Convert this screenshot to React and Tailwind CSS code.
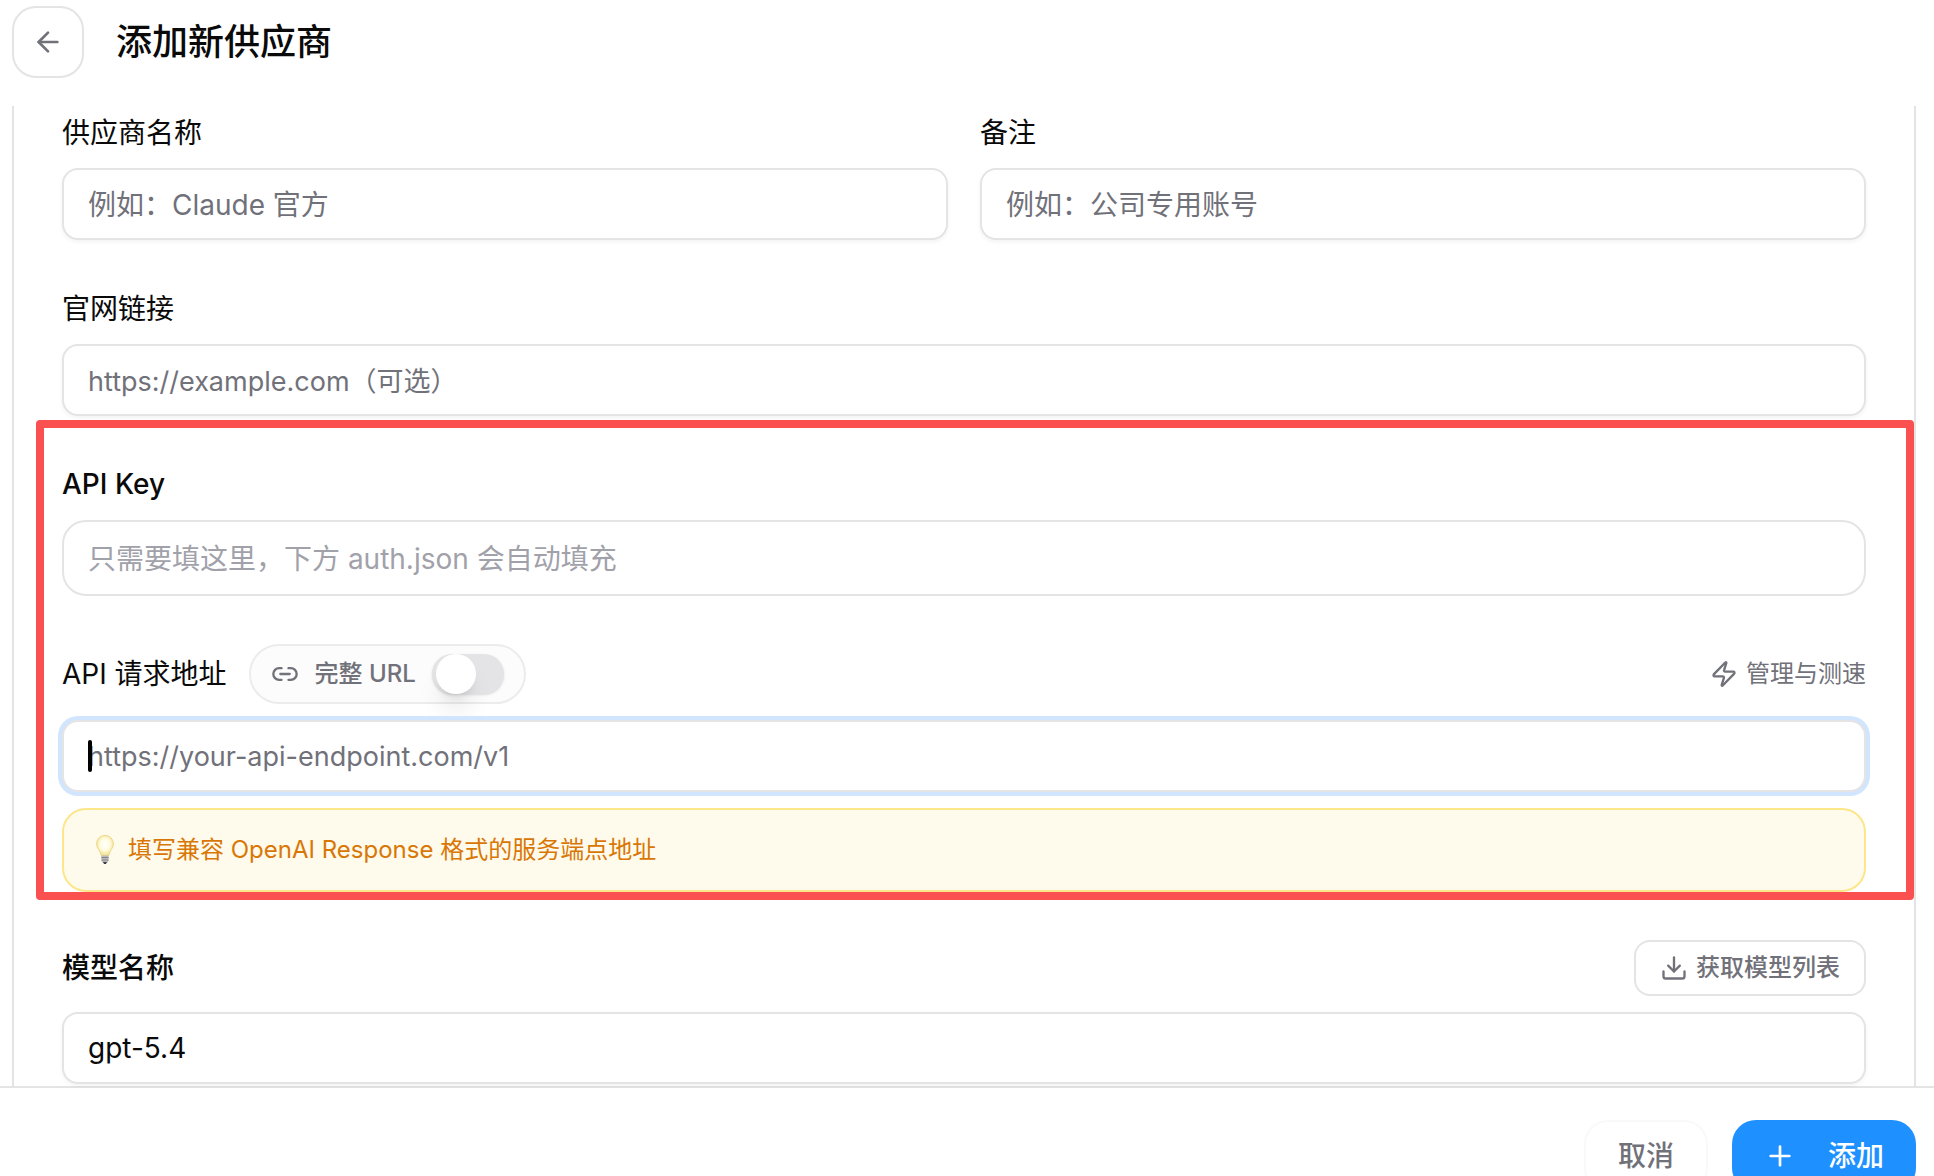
import { useState } from "react";
import { ArrowLeft, Download, Link2, Plus, Zap } from "lucide-react";

const inputClass =
  "w-full h-[72px] px-6 rounded-2xl border-2 border-[#e4e4e4] bg-white shadow-[0_2px_4px_rgba(0,0,0,0.05)] text-[#0a0a0a] placeholder:text-[#71717a] outline-none";

function LightBulb() {
  return (
    <svg width="32" height="32" viewBox="0 0 32 32" aria-hidden="true" className="shrink-0">
      <defs>
        <radialGradient id="bulb" cx="50%" cy="45%" r="60%">
          <stop offset="0%" stopColor="#ffffff" />
          <stop offset="50%" stopColor="#fffbe0" />
          <stop offset="100%" stopColor="#f0d878" />
        </radialGradient>
      </defs>
      <path
        d="M17 1.5c-5 0-8.4 3.8-8.4 8.4 0 4.4 3.8 6.6 4.6 11.6h7.6c.8-5 4.6-7.2 4.6-11.6 0-4.6-3.4-8.4-8.4-8.4z"
        fill="url(#bulb)"
        stroke="#ecd98c"
      />
      <path d="M13.4 21.5h7.2v5l-1.4 2.2h-4.4l-1.4-2.2z" fill="#b9b9b9" />
      <path d="M13.4 23.5h7.2M13.6 26h6.8" stroke="#85858a" />
      <path d="M15 28h4l-1 2h-2z" fill="#3f3f46" />
    </svg>
  );
}

function Field({ id, label, placeholder, type = "text", textSize = "text-[28px]" }) {
  return (
    <div>
      <label htmlFor={id} className="block mb-[14px] text-[28px] leading-[42px]">
        {label}
      </label>
      <input
        id={id}
        type={type}
        placeholder={placeholder}
        className={`${inputClass} ${textSize} pt-[2px]`}
      />
    </div>
  );
}

export default function App() {
  const [apiKey, setApiKey] = useState("");
  const [endpoint, setEndpoint] = useState("");
  const [fullUrl, setFullUrl] = useState(false);
  const [model, setModel] = useState("gpt-5.4");

  return (
    <div className="h-screen overflow-hidden bg-white text-[#0a0a0a] font-[Inter,'Noto_Sans_CJK_SC',sans-serif]">
      <header className="flex items-center gap-8 px-3 pt-[6px] pb-7">
        <button
          type="button"
          aria-label="返回"
          className="flex items-center justify-center size-[72px] rounded-3xl border-2 border-[#e4e4e4] text-[#71717a]"
        >
          <ArrowLeft size={32} />
        </button>
        <h1 className="text-[36px] leading-[48px] font-medium">添加新供应商</h1>
      </header>

      <main className="ml-3 mr-[18px] px-12 pb-[2px] border-x-2 border-[#e4e4e4]">
        <div className="grid grid-cols-2 gap-8 pt-[6px]">
          <Field id="name" label="供应商名称" placeholder="例如：Claude 官方" />
          <Field id="notes" label="备注" placeholder="例如：公司专用账号" />
        </div>
        <div className="mt-12">
          <Field
            id="website"
            type="url"
            label="官网链接"
            placeholder="https://example.com（可选）"
            textSize="text-[27px]"
          />
        </div>

        <section className="relative pt-12">
          <label htmlFor="api-key" className="block mb-4 text-[28px] leading-10 font-medium">
            API Key
          </label>
          <input
            id="api-key"
            type="text"
            value={apiKey}
            onChange={(e) => setApiKey(e.target.value)}
            placeholder="只需要填这里，下方 auth.json 会自动填充"
            className="w-full h-[76px] px-6 pt-[2px] rounded-3xl border-2 border-[#e4e4e4] text-[28px] placeholder:text-[#a1a1aa] outline-none"
          />

          <div className="flex items-center justify-between mt-12 mb-4">
            <div className="flex items-center gap-[22px]">
              <label htmlFor="endpoint" className="text-[28px] leading-10">
                API 请求地址
              </label>
              <div className="flex items-center gap-4 h-[60px] px-5 rounded-full border-2 border-[#ececec] bg-[#fcfcfc]">
                <Link2 size={28} className="text-[#71717a]" />
                <label htmlFor="full-url" className="text-2xl font-medium text-[#71717a]">
                  完整 URL
                </label>
                <button
                  id="full-url"
                  type="button"
                  role="switch"
                  aria-checked={fullUrl}
                  onClick={() => setFullUrl(!fullUrl)}
                  className="flex w-[72px] h-10 px-1 rounded-full bg-[#e4e4e7] shadow-sm"
                >
                  <span
                    className={`size-10 rounded-full bg-white shadow-xl ${fullUrl ? "ml-auto" : ""}`}
                  />
                </button>
              </div>
            </div>
            <button type="button" className="flex items-center gap-2 text-2xl text-[#71717a]">
              <Zap size={28} />
              管理与测速
            </button>
          </div>

          <div className="relative">
            <input
              id="endpoint"
              type="url"
              value={endpoint}
              onChange={(e) => setEndpoint(e.target.value)}
              placeholder="https://your-api-endpoint.com/v1"
              className={`${inputClass} text-[27px] ring-4 ring-[#d2e5ff]`}
            />
            {/* 文本光标 */}
            <span className="absolute left-[26px] top-5 w-1 h-8 rounded-full bg-black" />
          </div>

          <div className="flex items-center gap-2 mt-4 px-6 py-6 rounded-3xl border-2 border-[#fde68a] bg-[#fefbec] text-2xl text-[#d97706]">
            <LightBulb />
            <p>填写兼容 OpenAI Response 格式的服务端点地址</p>
          </div>

          {/* 高亮必填区域 */}
          <div className="absolute -left-[26px] -right-12 top-1 -bottom-2 rounded-sm border-8 border-[#fb5050] pointer-events-none" />
        </section>

        <div className="flex items-center justify-between mt-12 mb-4">
          <label htmlFor="model" className="text-[28px] leading-10 font-medium">
            模型名称
          </label>
          <button
            type="button"
            className="flex items-center gap-2 h-14 px-6 rounded-2xl border-2 border-[#e4e4e4] text-2xl font-medium text-[#71717a]"
          >
            <Download size={28} />
            获取模型列表
          </button>
        </div>
        <input
          id="model"
          type="text"
          value={model}
          onChange={(e) => setModel(e.target.value)}
          className={`${inputClass} text-[28px]`}
        />
      </main>

      <footer className="flex justify-end gap-6 pt-8 pb-8 pr-[18px] border-t-2 border-[#e4e4e4] bg-white">
        <button
          type="button"
          className="h-[72px] px-8 rounded-3xl border-2 border-[#f9f9f9] text-[28px] font-medium text-[#71717a]"
        >
          取消
        </button>
        <button
          type="button"
          className="flex items-center gap-8 h-[72px] px-8 rounded-3xl bg-[#1e90ff] text-[28px] font-medium text-white"
        >
          <Plus size={32} />
          添加
        </button>
      </footer>
    </div>
  );
}
